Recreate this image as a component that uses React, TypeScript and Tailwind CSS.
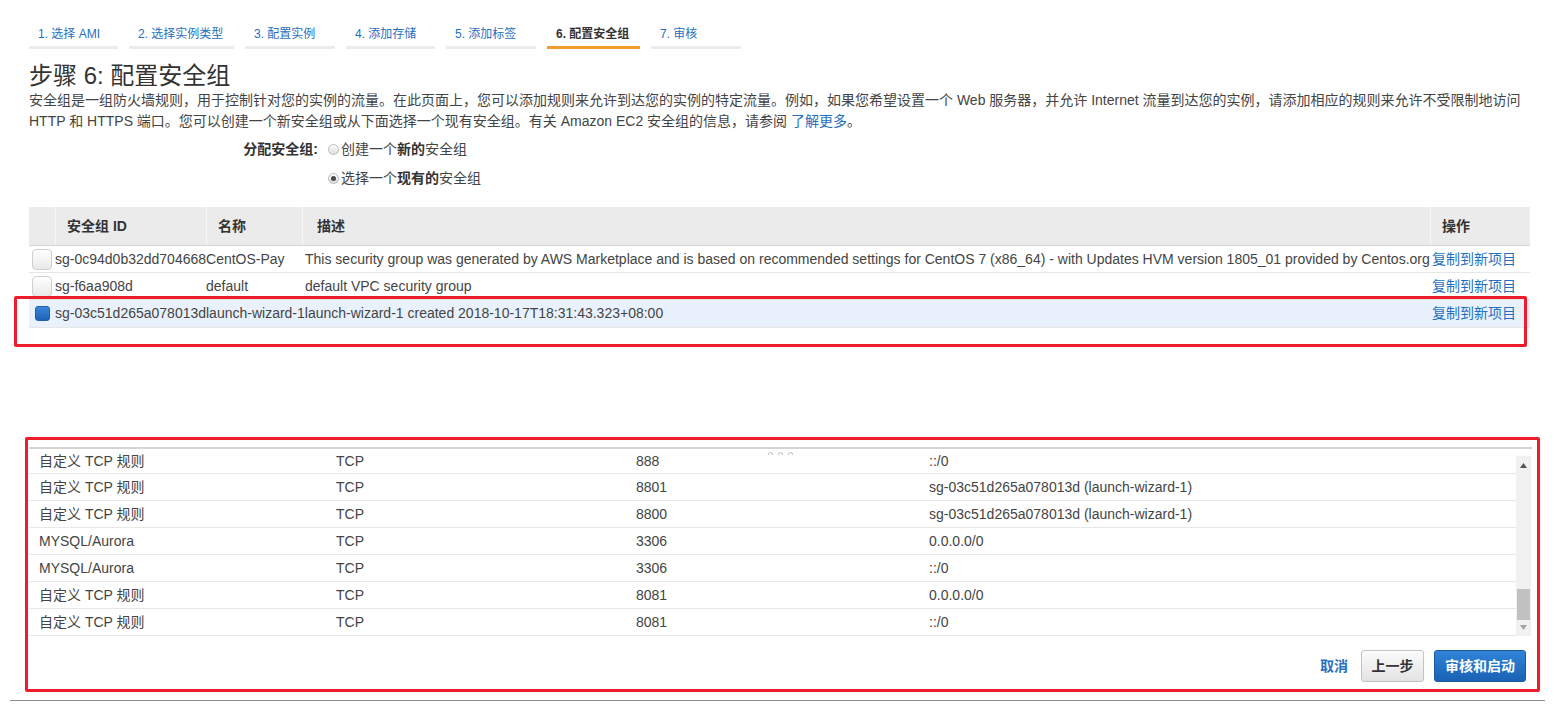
import React from 'react';

const TABS = [
  { label: '1. 选择 AMI', w: 'w-[89px]' },
  { label: '2. 选择实例类型', w: 'w-[105px]' },
  { label: '3. 配置实例', w: 'w-[90px]' },
  { label: '4. 添加存储', w: 'w-[89px]' },
  { label: '5. 添加标签', w: 'w-[90px]' },
  { label: '6. 配置安全组', w: 'w-[93px]', active: true },
  { label: '7. 审核', w: 'w-[90px]' },
];

const GROUPS = [
  {
    id: 'sg-0c94d0b32dd704668',
    name: 'CentOS-Pay',
    desc: 'This security group was generated by AWS Marketplace and is based on recommended settings for CentOS 7 (x86_64) - with Updates HVM version 1805_01 provided by Centos.org',
  },
  { id: 'sg-f6aa908d', name: 'default', desc: 'default VPC security group' },
  {
    id: 'sg-03c51d265a078013d',
    name: 'launch-wizard-1',
    desc: 'launch-wizard-1 created 2018-10-17T18:31:43.323+08:00',
    selected: true,
  },
];

const RULES = [
  ['自定义 TCP 规则', 'TCP', '888', '::/0'],
  ['自定义 TCP 规则', 'TCP', '8801', 'sg-03c51d265a078013d (launch-wizard-1)'],
  ['自定义 TCP 规则', 'TCP', '8800', 'sg-03c51d265a078013d (launch-wizard-1)'],
  ['MYSQL/Aurora', 'TCP', '3306', '0.0.0.0/0'],
  ['MYSQL/Aurora', 'TCP', '3306', '::/0'],
  ['自定义 TCP 规则', 'TCP', '8081', '0.0.0.0/0'],
  ['自定义 TCP 规则', 'TCP', '8081', '::/0'],
];

function Radio({ checked }: { checked?: boolean }) {
  return (
    <span className="flex h-[11px] w-[11px] shrink-0 items-center justify-center rounded-full border border-[#b9b9b9] bg-gradient-to-b from-[#ffffff] to-[#dcdcdc]">
      {checked && <span className="h-[5px] w-[5px] rounded-full bg-[#4a4a4a]" />}
    </span>
  );
}

function Checkbox({ checked }: { checked?: boolean }) {
  if (checked) {
    return (
      <span className="flex h-[20px] w-[20px] items-center justify-center">
        <span className="h-[15px] w-[15px] rounded-[3px] border border-[#1b5fae] bg-gradient-to-b from-[#3a86d8] to-[#1a63b8]" />
      </span>
    );
  }
  return (
    <span className="block h-[21px] w-[20px] rounded-[4px] border border-[#cfcfcf] bg-gradient-to-b from-[#ffffff] to-[#e9e9e9]" />
  );
}

export default function App() {
  return (
    <div
      className="relative h-[712px] w-[1554px] overflow-hidden bg-white text-[#444]"
      style={{ fontFamily: '"Liberation Sans", "Noto Sans CJK SC", Arial, sans-serif' }}
    >
      {/* wizard tabs */}
      <div className="flex gap-[11px] pl-[29px] pt-[26px]">
        {TABS.map((t) => (
          <div
            key={t.label}
            className={`${t.w} border-b-[3px] pb-[4px] pl-[9px] text-[12px] leading-[16px] whitespace-nowrap ${
              t.active ? 'border-[#f29b2e] font-bold text-[#333]' : 'border-[#ebebeb] text-[#1f6fc0]'
            }`}
          >
            {t.label}
          </div>
        ))}
      </div>

      <h1 className="mt-[13px] pl-[29px] text-[24px] leading-[28px] font-normal text-[#333]">步骤 6: 配置安全组</h1>
      <p className="pl-[29px] text-[14px] leading-[21px] whitespace-nowrap text-[#444]">
        安全组是一组防火墙规则，用于控制针对您的实例的流量。在此页面上，您可以添加规则来允许到达您的实例的特定流量。例如，如果您希望设置一个 Web 服务器，并允许 Internet 流量到达您的实例，请添加相应的规则来允许不受限制地访问
        <br />
        HTTP 和 HTTPS 端口。您可以创建一个新安全组或从下面选择一个现有安全组。有关 Amazon EC2 安全组的信息，请参阅{' '}
        <span className="text-[#1f6fc0]">了解更多</span>。
      </p>

      {/* assign group */}
      <div className="mt-[3px] text-[14px] text-[#444]">
        <div className="flex h-[29px] items-center">
          <span className="w-[318px] text-right font-bold text-[#333]">分配安全组:</span>
          <span className="ml-[10px]"><Radio /></span>
          <span className="ml-[2px]">创建一个<b className="text-[#333]">新的</b>安全组</span>
        </div>
        <div className="flex h-[29px] items-center">
          <span className="w-[318px]" />
          <span className="ml-[10px]"><Radio checked /></span>
          <span className="ml-[2px]">选择一个<b className="text-[#333]">现有的</b>安全组</span>
        </div>
      </div>

      {/* security groups table */}
      <div className="relative ml-[29px] mt-[14px] w-[1501px] text-[14px]">
        <div className="flex h-[39px] items-center border-b border-[#d6d6d6] bg-[#ebebeb] font-bold text-[#333]">
          <div className="h-full w-[26px]" />
          <div className="flex h-full w-[151px] items-center border-l border-[#f6f6f6] pl-[11px]">安全组 ID</div>
          <div className="flex h-full w-[96px] items-center border-l border-[#f6f6f6] pl-[11px]">名称</div>
          <div className="flex h-full w-[1128px] items-center border-l border-[#f6f6f6] pl-[14px]">描述</div>
          <div className="flex h-full w-[100px] items-center border-l border-[#f6f6f6] pl-[11px]">操作</div>
        </div>
        {GROUPS.map((g) => (
          <div
            key={g.id}
            className={`flex items-center border-b border-[#e6e6e6] whitespace-nowrap ${
              g.selected ? 'h-[28px] bg-[#e9f2fc]' : 'h-[27px] bg-white'
            }`}
          >
            <div className="flex w-[26px] shrink-0 items-center pl-[3px]">
              <Checkbox checked={g.selected} />
            </div>
            <div className="min-w-[151px]">{g.id}</div>
            <div className="min-w-[96px]">{g.name}</div>
            <div className={`w-[1128px] shrink ${g.selected ? '' : 'pl-[3px]'}`}>{g.desc}</div>
            <div className="ml-auto w-[98px] shrink-0 text-[#1f6fc0]">复制到新项目</div>
          </div>
        ))}
        {/* annotation */}
        <div className="pointer-events-none absolute left-[-15px] top-[89px] h-[51px] w-[1513px] rounded-[2px] border-[3px] border-[#ee1d2b]" />
      </div>

      {/* rules panel */}
      <div className="relative ml-[25px] mt-[109px] h-[255px] w-[1515px] rounded-[2px] border-[3px] border-[#ee1d2b]">
        <div className="ml-[1px] mt-[7px] w-[1503px] border-t-2 border-[#d4d4d4]">
          <div className="flex h-[189px]">
            <div className="h-full w-[1487px] overflow-hidden text-[14px] text-[#444]">
              {RULES.map((r, i) => (
                <div
                  key={i}
                  className={`flex items-center border-b border-[#e8e8e8] whitespace-nowrap ${i === 0 ? 'h-[25px]' : 'h-[27px]'}`}
                >
                  <div className="w-[297px] pl-[10px]">{r[0]}</div>
                  <div className="w-[300px] pl-[10px]">{r[1]}</div>
                  <div className="w-[293px] pl-[10px]">{r[2]}</div>
                  <div className="pl-[10px]">{r[3]}</div>
                </div>
              ))}
            </div>
            {/* scrollbar */}
            <div className="mt-[7px] flex h-[180px] w-[15px] flex-col items-center bg-[#f1f1f1]">
              <svg width="7" height="5" viewBox="0 0 7 5" className="mt-[7px]">
                <path d="M0 5 L3.5 0 L7 5 Z" fill="#555" />
              </svg>
              <div className="mt-[121px] h-[31px] w-[13px] bg-[#c1c1c1]" />
              <svg width="7" height="5" viewBox="0 0 7 5" className="mt-[5px]">
                <path d="M0 0 L3.5 5 L7 0 Z" fill="#a3a3a3" />
              </svg>
            </div>
          </div>
          <div className="flex items-center justify-end gap-[10px] pr-[6px] pt-[12px]">
            <span className="mr-[3px] text-[14px] font-bold text-[#2a6fc3]">取消</span>
            <button className="h-[32px] w-[63px] rounded-[3px] border border-[#c3c3c3] bg-gradient-to-b from-[#fbfbfb] to-[#e3e3e3] text-[14px] font-bold text-[#333]">
              上一步
            </button>
            <button className="h-[32px] w-[92px] rounded-[3px] border border-[#1a5aa3] bg-gradient-to-b from-[#2f84d8] to-[#1a62b4] text-[14px] font-bold text-white">
              审核和启动
            </button>
          </div>
        </div>
        {/* resize handle dots */}
        <div className="absolute left-[740px] top-[12px] flex gap-[5px]">
          {[0, 1, 2].map((d) => (
            <span key={d} className="h-[3px] w-[5px] rounded-t-full border border-b-0 border-[#c9c9c9]" />
          ))}
        </div>
      </div>

      <div className="ml-[10px] mt-[8px] h-[1px] w-[1535px] bg-[#8a8a8a]" />
    </div>
  );
}
